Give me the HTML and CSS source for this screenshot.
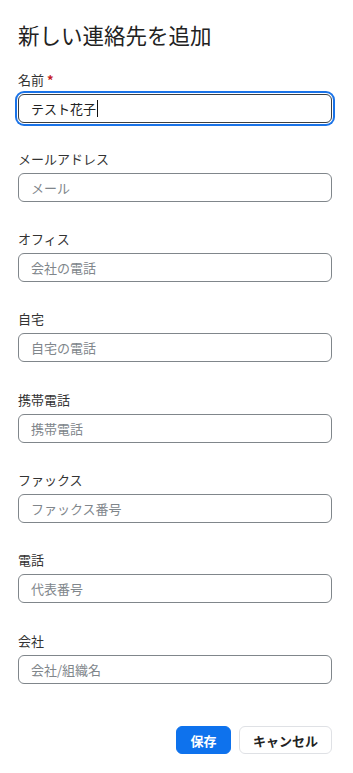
FILE: index.html
```html
<!DOCTYPE html>
<html lang="ja">
<head>
<meta charset="utf-8">
<title>新しい連絡先を追加</title>
<link rel="stylesheet" href="styles.css">
</head>
<body>
<div class="dialog">
  <h1 class="title">新しい連絡先を追加</h1>
  <form class="form">
    <div class="field field-first">
      <label class="label">名前 <span class="req">*</span></label>
      <div class="input focused"><span class="value">テスト花子</span><span class="caret"></span></div>
    </div>
    <div class="field">
      <label class="label">メールアドレス</label>
      <input class="input" type="text" placeholder="メール">
    </div>
    <div class="field">
      <label class="label">オフィス</label>
      <input class="input" type="text" placeholder="会社の電話">
    </div>
    <div class="field">
      <label class="label">自宅</label>
      <input class="input" type="text" placeholder="自宅の電話">
    </div>
    <div class="field">
      <label class="label">携帯電話</label>
      <input class="input" type="text" placeholder="携帯電話">
    </div>
    <div class="field">
      <label class="label">ファックス</label>
      <input class="input" type="text" placeholder="ファックス番号">
    </div>
    <div class="field">
      <label class="label">電話</label>
      <input class="input" type="text" placeholder="代表番号">
    </div>
    <div class="field">
      <label class="label">会社</label>
      <input class="input" type="text" placeholder="会社/組織名">
    </div>
    <div class="actions">
      <button type="button" class="btn btn-primary">保存</button>
      <button type="button" class="btn btn-secondary">キャンセル</button>
    </div>
  </form>
</div>
</body>
</html>
```

FILE: styles.css
```css
* { box-sizing: border-box; }
html, body {
  margin: 0;
  padding: 0;
  background: #ffffff;
}
body {
  font-family: "Noto Sans CJK JP", "Noto Sans", sans-serif;
  color: #222;
}
.dialog {
  width: 353px;
  padding: 21.5px 21px 0 18px;
}
.title {
  margin: 0 0 22.5px 0;
  font-size: 21.5px;
  line-height: 26px;
  font-weight: 400;
  color: #222;
  letter-spacing: 0;
}
.form {
  display: flex;
  flex-direction: column;
}
.field {
  display: flex;
  flex-direction: column;
  margin-bottom: 27.4px;
}
.field-first {
  margin-bottom: 25.5px;
}
.label {
  font-size: 13px;
  line-height: 20px;
  color: #333;
  margin-bottom: 4px;
}
.req {
  color: #c5221f;
  font-weight: 700;
}
.input {
  display: flex;
  align-items: center;
  width: 100%;
  height: 29px;
  margin: 0;
  padding: 0 12px;
  border: 1px solid #80868b;
  border-radius: 6px;
  font-family: "Noto Sans CJK JP", "Noto Sans", sans-serif;
  font-size: 13px;
  color: #222;
  background: #fff;
  outline: none;
}
.input::placeholder {
  color: #80868b;
}
.input.focused {
  border-color: #3c4043;
  box-shadow: 0 0 0 1px #fff, 0 0 0 3px #1a73e8;
}
.value {
  line-height: 18px;
}
.caret {
  display: inline-block;
  width: 1px;
  height: 17px;
  margin-left: 1px;
  background: #111;
}
.actions {
  display: flex;
  justify-content: flex-end;
  gap: 8px;
  margin-top: 15px;
}
.btn {
  height: 28px;
  border-radius: 6px;
  font-family: "Noto Sans CJK JP", "Noto Sans", sans-serif;
  font-size: 13px;
  font-weight: 700;
  padding: 0 12px;
  cursor: pointer;
}
.btn-primary {
  width: 55px;
  background: #0e72ed;
  border: 1px solid #0e72ed;
  color: #fff;
}
.btn-secondary {
  width: 93px;
  background: #fff;
  border: 1px solid #dfe1e5;
  color: #222;
}
```
